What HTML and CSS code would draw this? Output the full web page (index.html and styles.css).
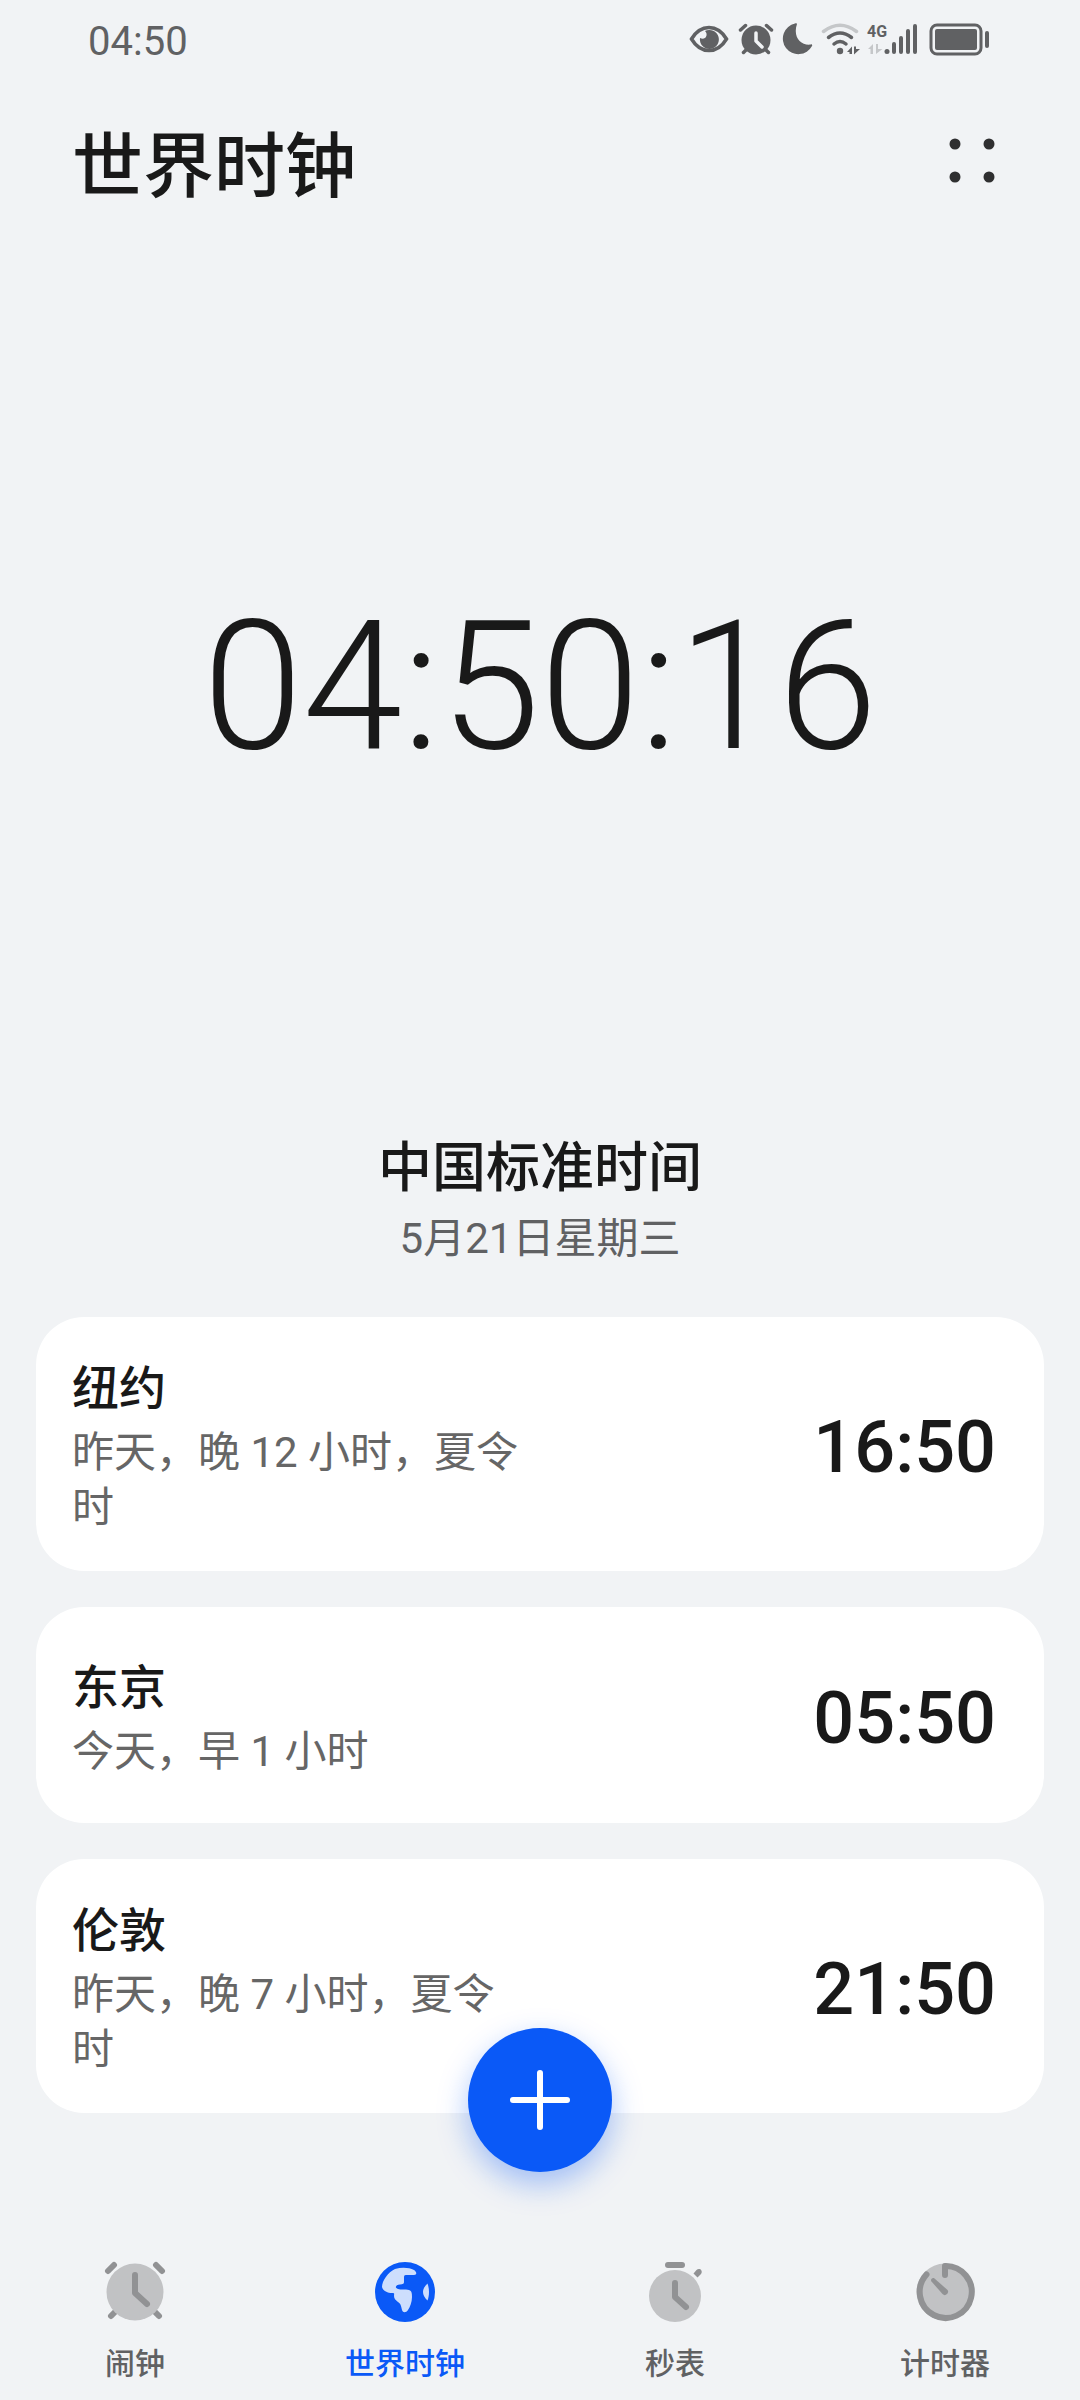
FILE: index.html
```html
<!DOCTYPE html>
<html lang="zh-CN">
<head>
    <meta charset="UTF-8">
    <meta name="viewport" content="width=device-width, initial-scale=1.0">
    <title>世界时钟</title>
    <link rel="stylesheet" href="styles.css">
</head>
<body>
    <div class="status">
        <span class="status-time">04:50</span>
        <div class="status-icons">
            <!-- eye comfort -->
            <svg width="46" height="40" viewBox="0 0 46 40">
                <path class="line" d="M5.500 19C10 11.500 16 7.500 23 7.500S36 11.500 40.500 19C36 26.500 30 30.500 23 30.500S10 26.500 5.500 19z"/>
                <path d="M19 11A9.500 9.500 0 1 1 14 18C19 21 23 15 19 11z"/>
            </svg>
            <!-- alarm -->
            <svg width="40" height="40" viewBox="0 0 40 40">
                <circle cx="20" cy="20" r="14.500"/>
                <path class="line" d="M4.500 10L9.500 5.500M30.500 5.500L35.500 10M10 30L7.500 32.500M30 30L32.500 32.500"/>
                <path class="cut" d="M20 13V21L26 27"/>
            </svg>
            <!-- do not disturb -->
            <svg width="36" height="40" viewBox="0 0 36 40">
                <path d="M17 4C17 3 16 3 15 3.500A15.500 15.500 0 1 0 32 26C32.500 25 32 24 31 24.500C21 26 12.500 17 17 4z"/>
            </svg>
            <!-- wifi -->
            <svg width="40" height="40" viewBox="0 0 40 40">
                <path class="line faded-line" d="M3.500 11.500Q20 -1 36.500 11.500"/>
                <path class="line" d="M8.500 17.500Q20 8.500 31.500 17.500M14 24Q20 19 26 24"/>
                <circle cx="20" cy="31" r="3.200"/>
                <path d="M27 32L32 26.500V34H29.500V32zM34 26.500H36V29H40L34 34.500z"/>
            </svg>
            <!-- mobile signal -->
            <svg width="56" height="40" viewBox="0 0 56 40">
                <text class="network" x="3" y="17">4G</text>
                <path class="faded" d="M4 29L9 24V34H6.500V29zM12 24H14V29H18.500L12 34z"/>
                <circle cx="23" cy="31.500" r="2.500"/>
                <path class="bars" d="M30 24V32M37 18V32M44 11V32M51 6V32"/>
            </svg>
            <!-- battery -->
            <svg width="68" height="40" viewBox="0 0 68 40">
                <rect class="line battery" x="7" y="5" width="50" height="29" rx="6"/>
                <rect x="11" y="9" width="42" height="21" rx="2"/>
                <rect x="61" y="11" width="4" height="17" rx="2"/>
            </svg>
        </div>
    </div>

    <header class="header">
        <h1>世界时钟</h1>
        <button class="menu" aria-label="更多">
            <svg width="72" height="72" viewBox="0 0 72 72">
                <circle cx="19" cy="20" r="5.500"/>
                <circle cx="53" cy="20" r="5.500"/>
                <circle cx="19" cy="53" r="5.500"/>
                <circle cx="53" cy="53" r="5.500"/>
            </svg>
        </button>
    </header>

    <main>
        <section class="hero">
            <div class="clock">04:50:16</div>
            <h2>中国标准时间</h2>
            <p>5月21日星期三</p>
        </section>

        <section class="cities">
            <article class="card">
                <div class="city">
                    <h3>纽约</h3>
                    <p>昨天，晚 12 小时，夏令时</p>
                </div>
                <span class="city-time">16:50</span>
            </article>
            <article class="card">
                <div class="city">
                    <h3>东京</h3>
                    <p>今天，早 1 小时</p>
                </div>
                <span class="city-time">05:50</span>
            </article>
            <article class="card">
                <div class="city">
                    <h3>伦敦</h3>
                    <p>昨天，晚 7 小时，夏令时</p>
                </div>
                <span class="city-time">21:50</span>
            </article>
        </section>
    </main>

    <footer>
        <button class="add" aria-label="添加城市">
            <svg width="72" height="72" viewBox="0 0 72 72">
                <path d="M36 9V63M9 36H63"/>
            </svg>
        </button>
        <nav>
            <a href="#alarm">
                <svg width="72" height="72" viewBox="0 0 72 72">
                    <path class="mark" d="M9 15L15 9M57 9L63 15M12 60L18 54M60 60L54 54"/>
                    <circle class="face" cx="36" cy="36" r="28.500"/>
                    <path class="mark" d="M36 19V37L48 48"/>
                </svg>
                <span>闹钟</span>
            </a>
            <a href="#world" class="active">
                <svg width="72" height="72" viewBox="0 0 72 72">
                    <circle class="globe" cx="36" cy="36" r="30"/>
                    <path class="land" d="M45 19H37C35 19 35 20 35 22V26C35 28 34 28 31 28.500C27 28.500 25 32 29 33C32 34 36 33 40 34C43 35 43 38 43 41C43 46 41 51 39 54C37 57 34 57 33 54C32 50 32 48 29 46C27 44 25 43 25 40C25 38 26 37 23 37C19 37 14 35 13 31C13 25 19 16 26 13C33 11 40 11.500 45 14C48 16 48 19 45 19z"/>
                    <path class="land" d="M58.500 27.500C52.500 33 52.500 39 58.500 44.500C60.500 39 60.500 33 58.500 27.500z"/>
                </svg>
                <span>世界时钟</span>
            </a>
            <a href="#stopwatch">
                <svg width="72" height="72" viewBox="0 0 72 72">
                    <path class="mark" d="M29 9H43"/>
                    <path class="knob" d="M54.500 17.500L57.500 14C60 11.500 64.500 14 62 18L58.500 21.500z"/>
                    <circle class="face" cx="36" cy="40" r="26"/>
                    <path class="mark" d="M36 27V41L47 51"/>
                </svg>
                <span>秒表</span>
            </a>
            <a href="#timer">
                <svg width="72" height="72" viewBox="0 0 72 72">
                    <circle class="face" cx="36" cy="36" r="28.500"/>
                    <path class="mark" d="M36 19V10A26 26 0 1 1 17.500 18.500"/>
                    <path class="knob" d="M25.500 22.500L38 33.500A3 3 0 1 1 33.500 38L22.500 25.500C21 23.500 23.500 21 25.500 22.500z"/>
                </svg>
                <span>计时器</span>
            </a>
        </nav>
    </footer>
</body>
</html>
```
FILE: styles.css
```css
*{
    margin: 0;
    padding: 0;
    box-sizing: border-box;
}
body{
    display: flex;
    flex-direction: column;
    min-height: 100vh;
    background-color: #f1f3f5;
    color: #191919;
    font-family: Roboto, "Noto Sans CJK SC", sans-serif;
}
h1, h2, h3{
    font-weight: 500;
}
svg{
    display: block;
}
button{
    border: 0;
    background: none;
    cursor: pointer;
}

/* status bar */
.status{
    display: flex;
    align-items: center;
    justify-content: space-between;
    height: 80px;
    padding: 0 88px;
    color: #606163;
}
.status-time{
    padding-top: 2px;
    font-size: 40px;
}
.status-icons{
    display: flex;
    gap: 4px;
    fill: #606163;
}
.line{
    fill: none;
    stroke: #606163;
    stroke-width: 3.5;
    stroke-linecap: round;
}
.cut{
    fill: none;
    stroke: #f1f3f5;
    stroke-width: 3.5;
    stroke-linecap: round;
    stroke-linejoin: round;
}
.faded{
    fill: #c5c7c9;
}
.faded-line{
    stroke: #c5c7c9;
}
.bars{
    stroke: #606163;
    stroke-width: 4;
    stroke-linecap: round;
}
.battery{
    stroke-width: 3;
}
.network{
    font-family: "Liberation Sans Narrow", Roboto, sans-serif;
    font-size: 16px;
    font-weight: bold;
}

/* title */
.header{
    display: flex;
    align-items: center;
    justify-content: space-between;
    height: 160px;
    padding: 0 72px;
}
.header h1{
    padding-top: 14px;
    font-size: 71px;
    line-height: 96px;
}
.menu{
    fill: #2f2f30;
}

main{
    flex: 1;
    display: flex;
    flex-direction: column;
}
.hero{
    flex: 1;
    display: flex;
    flex-direction: column;
    align-items: center;
    padding-bottom: 48px;
}
.clock{
    flex: 1;
    display: flex;
    align-items: center;
    padding-top: 4px;
    font-size: 180px;
    font-weight: 300;
}
.hero h2{
    font-size: 54px;
    line-height: 80px;
}
.hero p{
    font-size: 42px;
    line-height: 60px;
    color: #606163;
}

/* city list */
.cities{
    display: flex;
    flex-direction: column;
    gap: 36px;
    padding: 0 36px 143px;
}
.card{
    display: flex;
    align-items: center;
    justify-content: space-between;
    min-height: 216px;
    padding: 36px 48px 36px 36px;
    border-radius: 48px;
    background-color: #fff;
}
.city{
    flex: 0 0 50%;
}
.city h3{
    font-size: 47px;
    line-height: 72px;
}
.city p{
    font-size: 42px;
    line-height: 55px;
    color: #666;
}
.city-time{
    padding-top: 6px;
    font-size: 72px;
    font-weight: 500;
}

/* bottom tabs */
footer{
    position: relative;
    padding-bottom: 16px;
}
.add{
    position: absolute;
    left: 50%;
    bottom: 100%;
    width: 144px;
    height: 144px;
    margin: 0 0 84px -72px;
    border-radius: 50%;
    background-color: #0a59f7;
    box-shadow: 0 12px 30px rgba(10, 89, 247, 0.35);
}
.add svg{
    margin: 0 auto;
    stroke: #fff;
    stroke-width: 6;
    stroke-linecap: round;
}
nav{
    display: grid;
    grid-template-columns: repeat(4, 1fr);
}
nav a{
    display: flex;
    flex-direction: column;
    align-items: center;
    gap: 16px;
    color: #606163;
    font-size: 30px;
    font-weight: 500;
    line-height: 40px;
    text-decoration: none;
}
nav a.active{
    color: #0a59f7;
}
.face{
    fill: #c1c2c4;
}
.mark{
    fill: none;
    stroke: #919294;
    stroke-width: 6;
    stroke-linecap: round;
    stroke-linejoin: round;
}
.knob{
    fill: #919294;
}
.globe{
    fill: #0a59f7;
}
.land{
    fill: #cddefd;
}
```
